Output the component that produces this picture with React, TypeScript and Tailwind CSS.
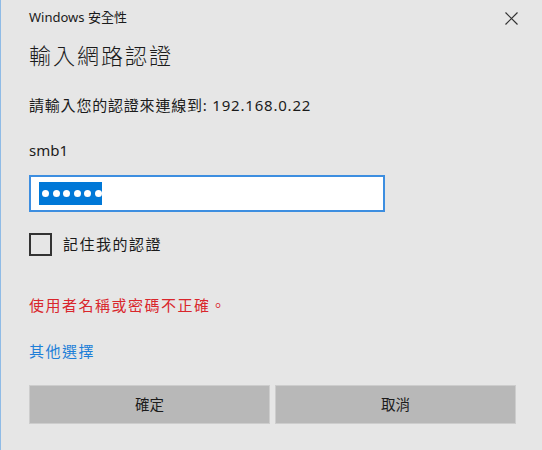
import { useState } from "react";

const font = { fontFamily: '"Noto Sans", "Noto Sans CJK TC", sans-serif' };

const App = () => {
  const [remember, setRemember] = useState(false);

  return (
    <div
      className="w-[542px] h-[450px] bg-[#e6e6e6] border-l border-[#8fbbe6] text-[#1b1b1b] flex flex-col pl-[28px] pr-[26px]"
      style={font}
    >
      {/* Header */}
      <div className="h-[36px] flex items-center justify-between">
        <span className="text-[13px]">Windows 安全性</span>
        <button className="w-[24px] h-[24px] flex items-center justify-center mr-[-7px] cursor-pointer">
          <svg width="13" height="13" viewBox="0 0 13 13">
            <path d="M0.5 0.5 L12.5 12.5 M12.5 0.5 L0.5 12.5" stroke="#333" strokeWidth="1.2" fill="none" />
          </svg>
        </button>
      </div>

      {/* Title */}
      <div className="h-[38px] flex items-center text-[22px] tracking-[2px] font-light">輸入網路認證</div>

      <div className="h-[30px] mt-[16px] flex items-center text-[15px] tracking-[0.8px]">
        請輸入您的認證來連線到: 192.168.0.22
      </div>

      <div className="h-[30px] mt-[15px] flex items-center text-[15px]">smb1</div>

      {/* Password field */}
      <div className="mt-[10px] w-[356px] h-[37px] bg-white border-2 border-[#3d8ee0] flex items-center pl-[8px]">
        <div className="w-[63px] h-[23px] bg-[#0078d7] flex items-center gap-[3.5px] pl-[3px]">
          {[0, 1, 2, 3, 4, 5].map((i) => (
            <span key={i} className="w-[7px] h-[7px] rounded-full bg-white" />
          ))}
        </div>
      </div>

      {/* Remember */}
      <div className="mt-[21px] h-[23px] flex items-center gap-[11px]">
        <button
          onClick={() => setRemember(!remember)}
          className="w-[23px] h-[23px] border-2 border-[#333] bg-transparent cursor-pointer"
        />
        <span className="text-[15px] tracking-[1.5px]">記住我的認證</span>
      </div>

      <div className="h-[30px] mt-[34px] flex items-center text-[15px] tracking-[1.5px] text-[#d9262c]">
        使用者名稱或密碼不正確。
      </div>

      <div className="h-[30px] mt-[16px] flex items-center text-[15px] tracking-[1.5px] text-[#1e7fd8] cursor-pointer">
        其他選擇
      </div>

      {/* Buttons */}
      <div className="mt-[19px] flex gap-[5px]">
        <button className="flex-1 h-[39px] bg-[#b8b8b8] border border-[#cdcdcd] text-[14.5px] cursor-pointer">
          確定
        </button>
        <button className="flex-1 h-[39px] bg-[#b8b8b8] border border-[#cdcdcd] text-[14.5px] cursor-pointer">
          取消
        </button>
      </div>
    </div>
  );
};

export default App;
